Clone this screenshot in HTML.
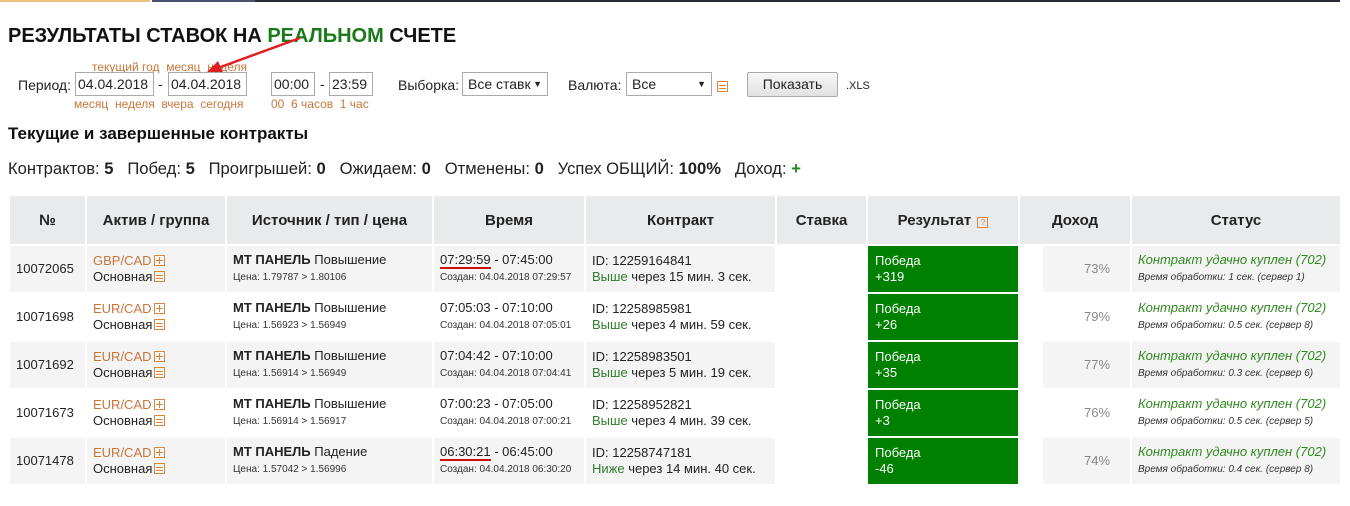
<!DOCTYPE html>
<html><head><meta charset="utf-8"><style>
*{box-sizing:border-box;margin:0;padding:0}
body{width:1350px;height:506px;background:#fff;font-family:"Liberation Sans","DejaVu Sans",sans-serif;color:#222;position:relative;overflow:hidden;font-size:13px}
.a{position:absolute;white-space:nowrap}
.or{color:#c8763a}
.inp{position:absolute;height:24px;border:1px solid #aaa;background:#fff;font-size:14px;padding:3px 2px;color:#222}
.sel{position:absolute;height:24px;border:1px solid #aaa;background:#fff;font-size:14px;padding:3px 5px;color:#222}
.sel:after{content:"▼";position:absolute;right:5px;top:6px;font-size:9px}
.ico{display:inline-block;width:11px;height:11px;border:1px solid #d9873f;position:relative;vertical-align:-1px;margin-left:2px}
.ico.m:before{content:"";position:absolute;left:1px;right:1px;top:3px;height:1px;background:#d9873f}
.ico.m:after{content:"";position:absolute;left:1px;right:1px;top:6px;height:1px;background:#d9873f}
.ico.p:before{content:"";position:absolute;left:1px;right:1px;top:4px;height:1px;background:#d9873f}
.ico.p:after{content:"";position:absolute;top:1px;bottom:1px;left:4px;width:1px;background:#d9873f}
table{position:absolute;left:8px;top:194px;border-collapse:separate;border-spacing:2px}
th{background:#e9eaeb;height:48px;font-size:15px;font-weight:bold;text-align:center;color:#222}
td{height:46px;font-size:13px;padding:0 6px;vertical-align:middle;line-height:16px}
tr.g td{background:#f4f4f4}
td.w{background:#fff!important}
td.res{background:#008000!important;color:#fff;padding-left:7px}
.sm{font-size:10px;color:#333}
.gr{color:#2f7d2f}
.st{color:#2f8a1f;font-style:italic}
.pct{color:#888;font-size:13px}
</style></head><body>
<div class="a" style="left:0;top:0;width:150px;height:2px;background:#f0c080"></div>
<div class="a" style="left:152px;top:0;width:103px;height:2px;background:#4a5270"></div>
<div class="a" style="left:255px;top:0;width:1085px;height:2px;background:#2a2c35"></div>

<div class="a" style="left:8px;top:25px;font-size:20px;font-weight:bold;color:#111">РЕЗУЛЬТАТЫ СТАВОК НА <span style="color:#1a7a1a">РЕАЛЬНОМ</span> СЧЕТЕ</div>

<div class="a or" style="left:92px;top:60px;font-size:12px">текущий год &nbsp;месяц &nbsp;неделя</div>
<svg class="a" style="left:160px;top:28px" width="150" height="50"><line x1="140" y1="10" x2="58" y2="40" stroke="#e02020" stroke-width="2.5"/><polygon points="46,45 58,33 63,44" fill="#e02020"/></svg>
<div class="a" style="left:18px;top:77px;font-size:14px">Период:</div>
<div class="inp" style="left:75px;top:72px;width:79px">04.04.2018</div>
<div class="a" style="left:158px;top:76px;font-size:14px">-</div>
<div class="inp" style="left:168px;top:72px;width:79px">04.04.2018</div>
<div class="a or" style="left:74px;top:97px;font-size:12px">месяц &nbsp;неделя &nbsp;вчера &nbsp;сегодня</div>
<div class="inp" style="left:271px;top:72px;width:44px">00:00</div>
<div class="a" style="left:320px;top:76px;font-size:14px">-</div>
<div class="inp" style="left:329px;top:72px;width:44px">23:59</div>
<div class="a or" style="left:271px;top:97px;font-size:12px">00 &nbsp;6 часов &nbsp;1 час</div>
<div class="a" style="left:398px;top:77px;font-size:14px">Выборка:</div>
<div class="sel" style="left:462px;top:72px;width:86px">Все ставк</div>
<div class="a" style="left:568px;top:77px;font-size:14px">Валюта:</div>
<div class="sel" style="left:626px;top:72px;width:86px">Все</div>
<span class="a ico m" style="left:715px;top:79px"></span>
<div class="a" style="left:747px;top:72px;width:91px;height:25px;border:1px solid #aaa;border-radius:2px;background:linear-gradient(#f6f6f6,#e2e2e2);font-size:14px;text-align:center;line-height:23px">Показать</div>
<div class="a" style="left:846px;top:80px;font-size:11px">.XLS</div>

<div class="a" style="left:8px;top:124px;font-size:17px;font-weight:bold;color:#111">Текущие и завершенные контракты</div>
<div class="a" style="left:8px;top:159px;font-size:16.6px">Контрактов: <b>5</b> &nbsp; Побед: <b>5</b> &nbsp; Проигрышей: <b>0</b> &nbsp; Ожидаем: <b>0</b> &nbsp; Отменены: <b>0</b> &nbsp; Успех ОБЩИЙ: <b>100%</b> &nbsp; Доход: <b style="color:#1a8a1a">+</b></div>

<table>
<colgroup><col style="width:75px"><col style="width:138px"><col style="width:205px"><col style="width:150px"><col style="width:189px"><col style="width:89px"><col style="width:150px"><col style="width:110px"><col style="width:208px"></colgroup>
<tr><th>№</th><th>Актив / группа</th><th>Источник / тип / цена</th><th>Время</th><th>Контракт</th><th>Ставка</th><th>Результат <span class="ico" style="width:11px;height:11px;font-size:8px;line-height:9px;color:#d9873f;font-weight:normal;vertical-align:0">?</span></th><th>Доход</th><th>Статус</th></tr>

<tr class="g"><td>10072065</td><td><span class="or">GBP/CAD</span><span class="ico p"></span><br>Основная<span class="ico m"></span></td><td><b>МТ ПАНЕЛЬ</b> Повышение<br><span class="sm">Цена: 1.79787 &gt; 1.80106</span></td><td><span style="border-bottom:2px solid #d01010">07:29:59</span> - 07:45:00<br><span class="sm">Создан: 04.04.2018 07:29:57</span></td><td>ID: 12259164841<br><span class="gr">Выше</span> через 15 мин. 3 сек.</td><td class="w"></td><td class="res">Победа<br>+319</td><td style="background:linear-gradient(90deg,#fff 23px,#f4f4f4 23px);text-align:center;padding-left:50px" class="pct">73%</td><td><span class="st">Контракт удачно куплен (702)</span><br><span class="sm" style="font-style:italic">Время обработки: 1 сек. (сервер 1)</span></td></tr>

<tr><td>10071698</td><td><span class="or">EUR/CAD</span><span class="ico p"></span><br>Основная<span class="ico m"></span></td><td><b>МТ ПАНЕЛЬ</b> Повышение<br><span class="sm">Цена: 1.56923 &gt; 1.56949</span></td><td>07:05:03 - 07:10:00<br><span class="sm">Создан: 04.04.2018 07:05:01</span></td><td>ID: 12258985981<br><span class="gr">Выше</span> через 4 мин. 59 сек.</td><td class="w"></td><td class="res">Победа<br>+26</td><td style="text-align:center;padding-left:50px" class="pct">79%</td><td><span class="st">Контракт удачно куплен (702)</span><br><span class="sm" style="font-style:italic">Время обработки: 0.5 сек. (сервер 8)</span></td></tr>

<tr class="g"><td>10071692</td><td><span class="or">EUR/CAD</span><span class="ico p"></span><br>Основная<span class="ico m"></span></td><td><b>МТ ПАНЕЛЬ</b> Повышение<br><span class="sm">Цена: 1.56914 &gt; 1.56949</span></td><td>07:04:42 - 07:10:00<br><span class="sm">Создан: 04.04.2018 07:04:41</span></td><td>ID: 12258983501<br><span class="gr">Выше</span> через 5 мин. 19 сек.</td><td class="w"></td><td class="res">Победа<br>+35</td><td style="background:linear-gradient(90deg,#fff 23px,#f4f4f4 23px);text-align:center;padding-left:50px" class="pct">77%</td><td><span class="st">Контракт удачно куплен (702)</span><br><span class="sm" style="font-style:italic">Время обработки: 0.3 сек. (сервер 6)</span></td></tr>

<tr><td>10071673</td><td><span class="or">EUR/CAD</span><span class="ico p"></span><br>Основная<span class="ico m"></span></td><td><b>МТ ПАНЕЛЬ</b> Повышение<br><span class="sm">Цена: 1.56914 &gt; 1.56917</span></td><td>07:00:23 - 07:05:00<br><span class="sm">Создан: 04.04.2018 07:00:21</span></td><td>ID: 12258952821<br><span class="gr">Выше</span> через 4 мин. 39 сек.</td><td class="w"></td><td class="res">Победа<br>+3</td><td style="text-align:center;padding-left:50px" class="pct">76%</td><td><span class="st">Контракт удачно куплен (702)</span><br><span class="sm" style="font-style:italic">Время обработки: 0.5 сек. (сервер 5)</span></td></tr>

<tr class="g"><td>10071478</td><td><span class="or">EUR/CAD</span><span class="ico p"></span><br>Основная<span class="ico m"></span></td><td><b>МТ ПАНЕЛЬ</b> Падение<br><span class="sm">Цена: 1.57042 &gt; 1.56996</span></td><td><span style="border-bottom:2px solid #d01010">06:30:21</span> - 06:45:00<br><span class="sm">Создан: 04.04.2018 06:30:20</span></td><td>ID: 12258747181<br><span class="gr">Ниже</span> через 14 мин. 40 сек.</td><td class="w"></td><td class="res">Победа<br>-46</td><td style="background:linear-gradient(90deg,#fff 23px,#f4f4f4 23px);text-align:center;padding-left:50px" class="pct">74%</td><td><span class="st">Контракт удачно куплен (702)</span><br><span class="sm" style="font-style:italic">Время обработки: 0.4 сек. (сервер 8)</span></td></tr>
</table>
</body></html>
